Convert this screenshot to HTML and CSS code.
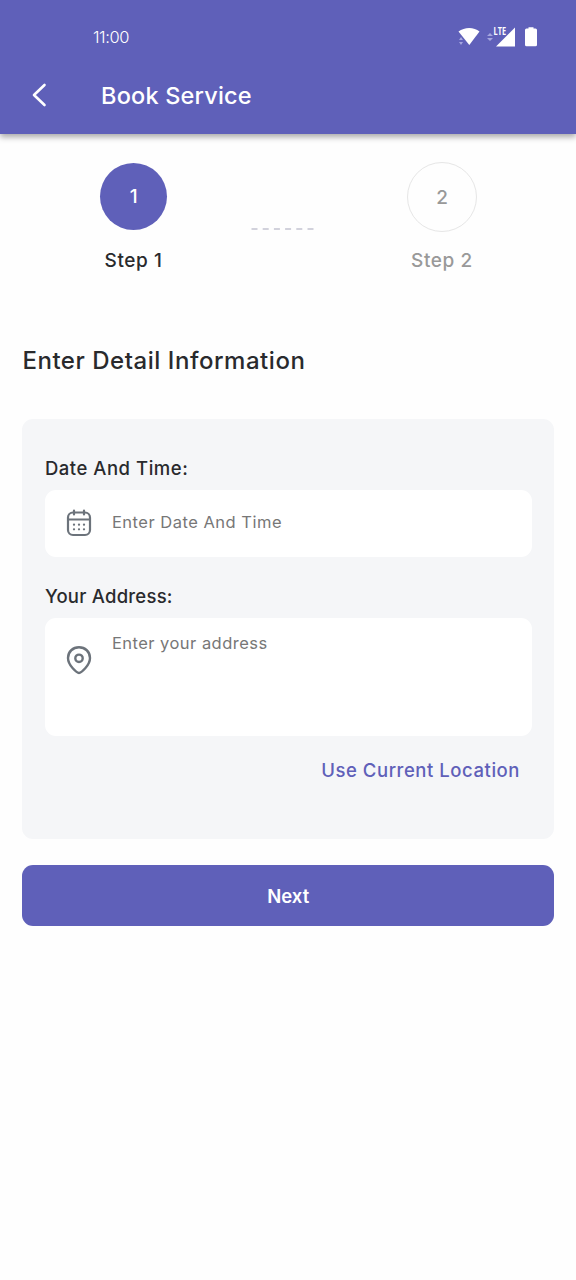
FILE: index.html
```html
<!DOCTYPE html>
<html lang="en">
<head>
<meta charset="utf-8">
<title>Book Service</title>
<link rel="stylesheet" href="styles.css">
</head>
<body>
<header class="header">
  <div class="status">
    <span class="clock">11:00</span>
    <svg class="status-icons" width="84" height="24" viewBox="0 0 84 24" fill="#fff">
      <path d="M4.500 6.500C10.500 1.800 20 1.800 25.500 6.500L15.300 20Z"/>
      <g fill="#a5a6df"><path d="M5 15l2 -3 2 3zM5 17h4l-2 3zM33 11l3-3 3 3zM33 13h6l-3 3z"/></g>
      <path d="M42 21.500L61 2.500V21.500Z"/>
      <text class="lte" x="39.500" y="9.800" textLength="12.500" lengthAdjust="spacingAndGlyphs">LTE</text>
      <path d="M74.500 3.500V2.200H79.500V3.500H81.500Q83 3.500 83 5V19.800Q83 21.300 81.500 21.300H72.500Q71 21.300 71 19.800V5Q71 3.500 72.500 3.500Z"/>
    </svg>
  </div>
  <div class="bar">
    <svg class="back" width="16" height="26" viewBox="0 0 16 26" fill="none" stroke="#fff" stroke-width="2.600" stroke-linecap="round" stroke-linejoin="round"><path d="M13.500 3L3 13L13.500 23"/></svg>
    <h1 class="title">Book Service</h1>
  </div>
</header>
<main class="content">
  <section class="steps">
    <div class="step active"><div class="circle">1</div><div class="step-label">Step 1</div></div>
    <svg class="dashes" width="64" height="2" viewBox="0 0 64 2"><path d="M0.500 1H64" stroke="#d2d2dc" stroke-width="2" stroke-dasharray="6 5.200"/></svg>
    <div class="step"><div class="circle">2</div><div class="step-label">Step 2</div></div>
  </section>
  <h2 class="heading">Enter Detail Information</h2>
  <section class="card">
    <div class="label label-date">Date And Time:</div>
    <div class="field">
      <svg class="icon" width="28" height="30" viewBox="0 0 28 30" fill="none" stroke="#6c737b" stroke-width="2.200" stroke-linecap="round">
        <rect x="3" y="4.500" width="22" height="22.500" rx="5"/>
        <path d="M3.500 11.500H24.500M9 2.500V6.500M19 2.500V6.500"/>
        <path stroke-width="2.300" d="M9 16.700h.01M14 16.700h.01M19 16.700h.01M9 21.300h.01M14 21.300h.01M19 21.300h.01"/>
      </svg>
      <span class="hint hint-date">Enter Date And Time</span>
    </div>
    <div class="label label-address">Your Address:</div>
    <div class="field tall">
      <svg class="icon" width="28" height="32" viewBox="0 0 28 32" fill="none" stroke="#6c737b" stroke-width="2.400" stroke-linejoin="round">
        <path d="M14 29C12 29 3 21.500 3 14C3 7.600 8 3.300 14 3.300S25 7.600 25 14C25 21.500 16 29 14 29Z"/>
        <circle cx="14" cy="14.300" r="3.700"/>
      </svg>
      <span class="hint hint-address">Enter your address</span>
    </div>
    <div class="location">Use Current Location</div>
  </section>
  <div class="next">Next</div>
</main>
</body>
</html>
```
FILE: styles.css
```css
* { box-sizing: border-box; }
body { margin: 0; background: #fefefe; color: #292a2d; font-family: Inter, "Liberation Sans", sans-serif; font-weight: 500; }
.header { height: 134px; background: #5f60b9; color: #fff; box-shadow: 0 3px 6px rgba(0, 0, 0, .34); padding-top: 25px; }
.status { display: flex; justify-content: space-between; height: 24px; padding: 0 38px 0 93px; }
.clock { font: 300 16.5px/25px Inter, sans-serif; letter-spacing: -.4px; }
.lte { font: 700 10.5px "Open Sans", sans-serif; }
.bar { display: flex; align-items: center; height: 30px; margin-top: 31px; padding-left: 31px; }
.title { margin: 0 0 0 54px; font-size: 23.5px; font-weight: 500; line-height: 31px; letter-spacing: .2px; white-space: nowrap; }
.content { padding: 28px 22px 0 22.4px; }
.steps { display: flex; justify-content: space-between; height: 111px; padding: 0 77px 0 76.2px; }
.step { display: flex; flex-direction: column; align-items: center; width: 70px; color: #999; }
.circle { display: grid; place-items: center; width: 70px; height: 70px; border: 1px solid #e6e6e6; border-radius: 50%; font-size: 19px; font-weight: 500; }
.active { color: #292a2d; }
.active .circle { width: 67px; height: 67px; margin: 1px 1.5px 2px; border: 0; background: #5f60b9; color: #fff; }
.step-label { margin-top: 16px; font-size: 19px; font-weight: 500; line-height: 25px; letter-spacing: .6px; white-space: nowrap; }
.dashes { margin-top: 66px; margin-right: 18px; margin-left: 9px; }
.heading { margin: 72px 0 0; font-size: 24px; font-weight: 500; line-height: 32px; letter-spacing: .54px; white-space: nowrap; }
.card { height: 420px; margin-top: 42px; padding: 36px 22.5px 0; border-radius: 11px; background: #f5f6f8; }
.label { font-size: 18.5px; line-height: 26px; height: 26px; letter-spacing: .53px; }
.label-address { margin-top: -1px; margin-bottom: 9.5px; letter-spacing: .24px; }
.field { display: flex; align-items: center; gap: 19px; height: 67px; margin: 8.5px 0 27px; padding: 0 20px; border-radius: 11px; background: #fff; }
.tall { align-items: flex-start; height: 118px; margin-bottom: 21px; }
.tall .icon { margin-top: 26px; }
.tall .hint { margin-top: 14px; }
.hint { color: #777; font-size: 16.5px; font-weight: 400; line-height: 22px; letter-spacing: .47px; }
.hint-date { margin-top: -3px; letter-spacing: .5px; }
.location { padding-right: 11.5px; color: #5f60b9; font-size: 18.5px; line-height: 26px; letter-spacing: .55px; text-align: right; }
.next { display: grid; place-items: center; height: 61px; margin-top: 26px; border-radius: 11px; background: #5f60b9; color: #fff; font-size: 18.5px; font-weight: 600; line-height: 26px; }
```
